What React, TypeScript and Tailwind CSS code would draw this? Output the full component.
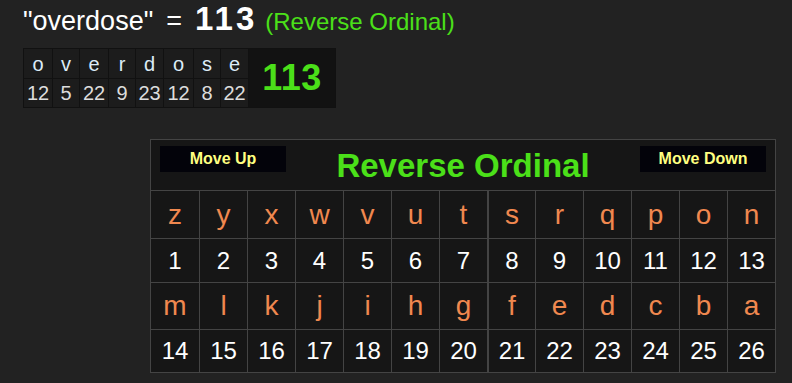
const word = [
  { ch: 'o', n: 12, w: 'w-[29px]' },
  { ch: 'v', n: 5, w: 'w-[27px]' },
  { ch: 'e', n: 22, w: 'w-[29px]' },
  { ch: 'r', n: 9, w: 'w-[27px]' },
  { ch: 'd', n: 23, w: 'w-[28px]' },
  { ch: 'o', n: 12, w: 'w-[30px]' },
  { ch: 's', n: 8, w: 'w-[27px]' },
  { ch: 'e', n: 22, w: 'w-[28px]' },
];

const alphabet = 'zyxwvutsrqponmlkjihgfedcba'.split('');

function LetterRow({ start, h }: { start: number; h: string }) {
  const letters = alphabet.slice(start, start + 13);
  return (
    <div className="grid grid-cols-[repeat(13,minmax(0,1fr))] border-t border-[#444]">
      {letters.map((l, i) => (
        <div
          key={l}
          className={`${h} flex items-center justify-center text-[28px] text-[#f0884f] ${i > 0 ? 'border-l border-[#444]' : ''} ${i === 7 ? 'border-l-2' : ''}`}
        >
          {l}
        </div>
      ))}
    </div>
  );
}

function NumberRow({ start, h }: { start: number; h: string }) {
  const nums = Array.from({ length: 13 }, (_, i) => start + i + 1);
  return (
    <div className="grid grid-cols-[repeat(13,minmax(0,1fr))] border-t border-[#444]">
      {nums.map((n, i) => (
        <div
          key={n}
          className={`${h} flex items-center justify-center text-[24px] text-white ${i > 0 ? 'border-l border-[#444]' : ''} ${i === 7 ? 'border-l-2' : ''}`}
        >
          {n}
        </div>
      ))}
    </div>
  );
}

export default function App() {
  return (
    <div className="min-h-screen w-full bg-[#222222] font-['Liberation_Sans',Arial,sans-serif] overflow-hidden">
      {/* heading */}
      <div className="flex items-baseline pl-[23px] pt-[2px] h-[40px] leading-none text-white">
        <span className="text-[27px]">"overdose"</span>
        <span className="text-[27px] ml-[13px]">=</span>
        <span className="text-[33px] font-bold ml-[13px] tracking-[3px]">113</span>
        <span className="text-[24px] text-[#4be019] ml-[8px]">(Reverse Ordinal)</span>
      </div>

      {/* word breakdown */}
      <div className="ml-[23px] mt-[8px] flex">
        <table className="border-collapse table-fixed bg-[#1c1c1c]">
          <tbody>
            <tr>
              {word.map((w, i) => (
                <td key={i} className={`${w.w} h-[30px] p-0 border border-[#111] text-center text-[20px] leading-none text-[#dcecf8]`}>
                  {w.ch}
                </td>
              ))}
              <td rowSpan={2} className="w-[87px] p-0 border border-[#111] bg-[#121212] text-center text-[36px] font-bold tracking-[0.5px] text-[#4be019]">
                113
              </td>
            </tr>
            <tr>
              {word.map((w, i) => (
                <td key={i} className={`${w.w} h-[29px] p-0 border border-[#111] text-center text-[20px] leading-none text-[#dddddd]`}>
                  {w.n}
                </td>
              ))}
            </tr>
          </tbody>
        </table>
      </div>

      {/* cipher chart */}
      <div className="ml-[150px] mt-[31px] w-[626px] border border-[#444] bg-[#161616]">
        <div className="h-[50px] flex items-start justify-between px-[9px] pt-[6px]">
          <button className="w-[126px] h-[26px] bg-[#03030a] text-[16px] font-bold text-[#ffff80]">Move Up</button>
          <div className="text-[33px] font-bold text-[#4be019] leading-none mt-[3px]">Reverse Ordinal</div>
          <button className="w-[126px] h-[26px] bg-[#03030a] text-[16px] font-bold text-[#ffff80]">Move Down</button>
        </div>
        <LetterRow start={0} h="h-[47px]" />
        <NumberRow start={0} h="h-[43px]" />
        <LetterRow start={13} h="h-[46px]" />
        <NumberRow start={13} h="h-[42px]" />
      </div>
    </div>
  );
}
